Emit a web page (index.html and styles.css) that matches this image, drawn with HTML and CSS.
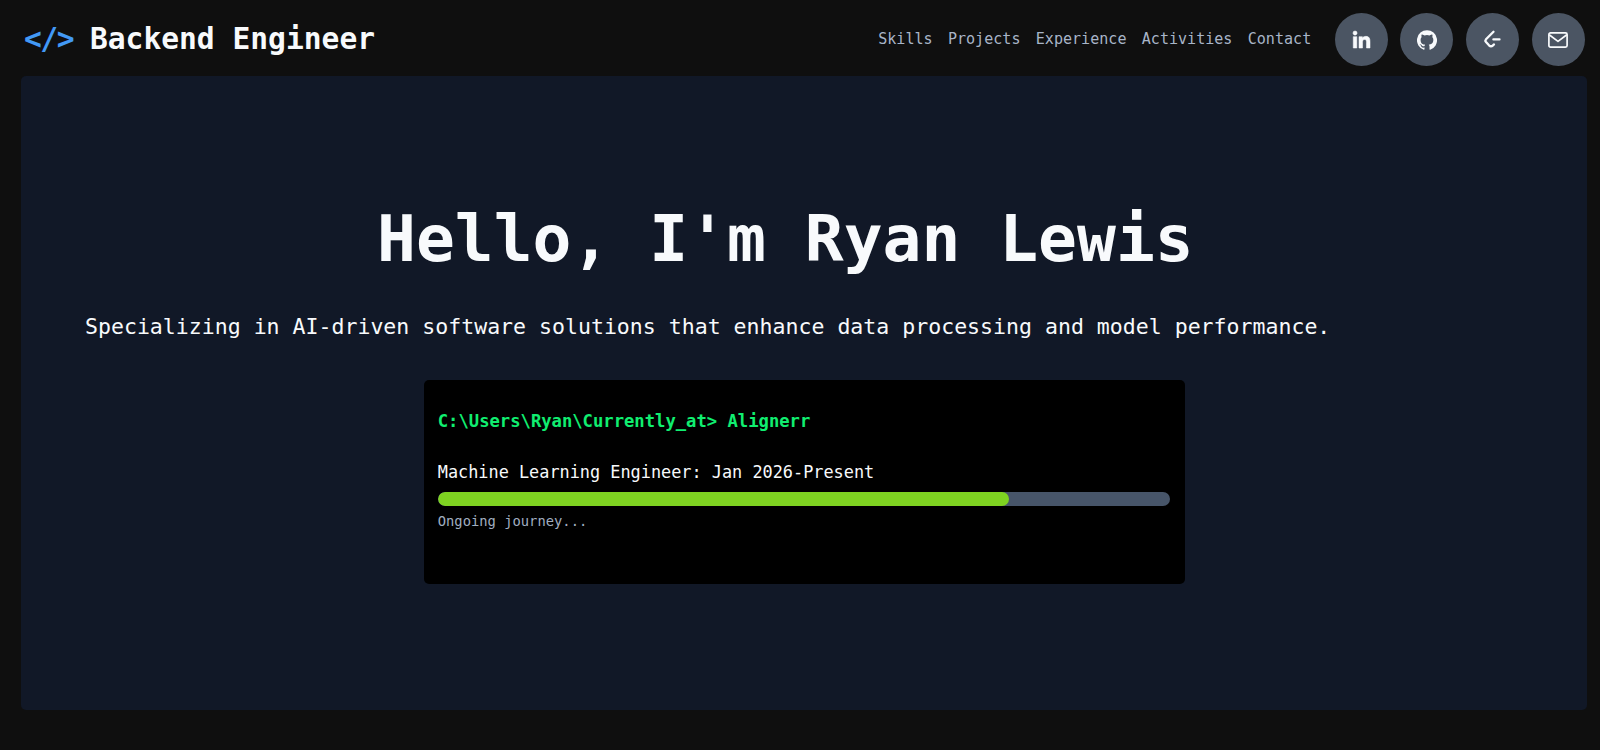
FILE: index.html
```html
<!DOCTYPE html>
<html lang="en">

<head>
    <meta charset="UTF-8">
    <meta name="viewport" content="width=device-width, initial-scale=1.0">
    <title>Ryan Lewis | Backend Engineer</title>
    <link rel="stylesheet" href="styles.css">
</head>

<body>
    <header class="header">
        <div class="logo">
            <span class="logo-icon">&lt;/&gt;</span>
            <span class="logo-text">Backend Engineer</span>
        </div>
        <div class="header-right">
            <nav class="nav">
                <a href="#skills">Skills</a>
                <a href="#projects">Projects</a>
                <a href="#experience">Experience</a>
                <a href="#activities">Activities</a>
                <a href="#contact">Contact</a>
            </nav>
            <div class="social">
                <a href="#" aria-label="LinkedIn">
                    <svg class="icon-linkedin" viewBox="0 0 448 448" fill="currentColor" stroke="currentColor" stroke-width="14">
                        <path d="M100.3 448H7.4V148.9h92.9zM53.8 108.1C24.1 108.1 0 83.5 0 53.8a53.8 53.8 0 0 1 107.6 0c0 29.7-24.1 54.3-53.8 54.3zM447.9 448h-92.7V302.4c0-34.7-.7-79.2-48.3-79.2-48.3 0-55.7 37.7-55.7 76.7V448h-92.8V148.9h89.1v40.8h1.3c12.4-23.5 42.7-48.3 87.9-48.3 94 0 111.3 61.9 111.3 142.3V448z" />
                    </svg>
                </a>
                <a href="#" aria-label="GitHub">
                    <svg class="icon-github" viewBox="0 0 24 24" fill="currentColor">
                        <path d="M12 .3a12 12 0 0 0-3.8 23.4c.6.1.8-.3.8-.6v-2c-3.3.7-4-1.6-4-1.6-.6-1.4-1.4-1.8-1.4-1.8-1-.7.1-.7.1-.7 1.2.1 1.9 1.2 1.9 1.2 1 1.8 2.8 1.3 3.5 1 0-.8.4-1.3.7-1.6-2.7-.3-5.5-1.3-5.5-6 0-1.2.5-2.3 1.3-3.1-.2-.4-.6-1.6 0-3.2 0 0 1-.3 3.4 1.2a11.5 11.5 0 0 1 6 0c2.3-1.5 3.3-1.2 3.3-1.2.6 1.6.2 2.8 0 3.2.9.8 1.3 1.9 1.3 3.2 0 4.6-2.8 5.6-5.5 5.9.5.4.9 1 .9 2.2v3.3c0 .3.1.7.8.6A12 12 0 0 0 12 .3" />
                    </svg>
                </a>
                <a href="#" aria-label="LeetCode">
                    <svg class="icon-leetcode" viewBox="0 0 20 20" fill="none" stroke="currentColor" stroke-width="2.3" stroke-linecap="round" stroke-linejoin="round">
                        <path d="M11.5 1.8L4 9.3Q2.9 10.600 4 12L7 15.300Q9 17.200 11 15.300L12 14.400" />
                        <path d="M11.400 9.400H17.500" />
                    </svg>
                </a>
                <a href="#" aria-label="Email">
                    <svg class="icon-mail" viewBox="0 0 20 16" fill="none" stroke="currentColor" stroke-width="1.7" stroke-linejoin="round">
                        <rect x="0.9" y="0.9" width="18.2" height="14.2" rx="1.6" />
                        <path d="M1.2 2.8L10 9.4L18.8 2.8" />
                    </svg>
                </a>
            </div>
        </div>
    </header>

    <main class="hero">
        <h1>Hello, I'm Ryan Lewis</h1>
        <p class="subtitle">Specializing in AI-driven software solutions that enhance data processing and model performance.</p>
        <div class="terminal">
            <p class="prompt">C:\Users\Ryan\Currently_at&gt; Alignerr</p>
            <p class="role">Machine Learning Engineer: Jan 2026-Present</p>
            <div class="progress">
                <div class="progress-fill" style="width: 78%"></div>
            </div>
            <p class="status">Ongoing journey...</p>
        </div>
    </main>
</body>

</html>
```
FILE: styles.css
```css
* {
    margin: 0;
    padding: 0;
    box-sizing: border-box;
}

body {
    font-family: 'DejaVu Sans Mono', 'Liberation Mono', monospace;
    background-color: #0f0f0f;
    color: #f8fafc;
    min-height: 100vh;
    overflow: hidden;
}

a {
    color: inherit;
    text-decoration: none;
}

/* Header */
.header {
    display: flex;
    justify-content: space-between;
    align-items: center;
    height: 76px;
    padding: 2px 15.5px 0 24px;
}

.logo {
    display: flex;
    gap: 17px;
    font-size: 29.6px;
    font-weight: bold;
    line-height: 40px;
}

.logo-icon {
    color: #4299f5;
    letter-spacing: -1.5px;
}

.header-right {
    display: flex;
    align-items: center;
    gap: 23.5px;
}

.nav {
    display: flex;
    gap: 15.3px;
    color: #a8b5c8;
    font-size: 15.07px;
    line-height: 20px;
}

.social {
    display: flex;
    gap: 12.6px;
}

.social a {
    display: flex;
    align-items: center;
    justify-content: center;
    width: 53px;
    height: 53px;
    padding-top: 1px;
    border-radius: 50%;
    background-color: #4b5563;
}

.icon-linkedin {
    width: 19px;
    height: 17px;
    overflow: visible;
}

.icon-github,
.icon-leetcode {
    width: 20px;
    height: 20px;
}

.icon-mail {
    width: 20px;
    height: 16px;
}

/* Hero */
.hero {
    height: 634px;
    margin: 0 13.5px 0 21px;
    padding: 123px 63px 0 64px;
    border-radius: 5px;
    background-color: #111827;
}

h1 {
    margin-left: 292px;
    font-size: 64.6px;
    line-height: 80px;
    white-space: nowrap;
}

.subtitle {
    margin-top: 32px;
    font-size: 21.56px;
    line-height: 32px;
    white-space: nowrap;
}

/* Terminal card */
.terminal {
    width: 761px;
    height: 204px;
    margin: 37px auto 0;
    padding: 29px 15px 0 14px;
    border-radius: 5px;
    background-color: #000;
}

.prompt {
    color: #10ee70;
    font-size: 17.2px;
    font-weight: bold;
    line-height: 24px;
}

.role {
    margin-top: 27px;
    font-size: 16.88px;
    line-height: 24px;
}

.progress {
    height: 14px;
    margin-top: 8px;
    border-radius: 7px;
    background-color: #475569;
    overflow: hidden;
}

.progress-fill {
    height: 100%;
    border-radius: 7px;
    background-color: #7ed321;
}

.status {
    margin-top: 5px;
    color: #a0aec0;
    font-size: 13.8px;
    line-height: 20px;
}
```
